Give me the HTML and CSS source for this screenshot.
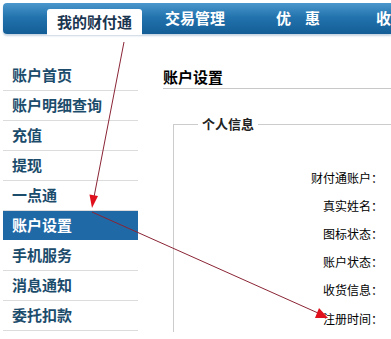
FILE: index.html
```html
<!DOCTYPE html>
<html lang="zh">
<head>
<meta charset="utf-8">
<title>账户设置</title>
<link rel="stylesheet" href="styles.css">
</head>
<body>
<div class="page">
  <header class="topbar">
    <div class="tab active">我的财付通</div>
    <div class="tab nav-trade">交易管理</div>
    <div class="tab nav-promo"><span>优</span><span class="gap">惠</span></div>
    <div class="tab nav-fav">收</div>
  </header>
  <div class="content">
    <ul class="sidebar">
      <li class="item">账户首页</li>
      <li class="item">账户明细查询</li>
      <li class="item">充值</li>
      <li class="item">提现</li>
      <li class="item">一点通</li>
      <li class="item selected">账户设置</li>
      <li class="item">手机服务</li>
      <li class="item">消息通知</li>
      <li class="item">委托扣款</li>
    </ul>
    <main class="main">
      <h2 class="title">账户设置</h2>
      <fieldset class="info">
        <legend class="legend">个人信息</legend>
        <div class="row"><span class="label">财付通账户：</span></div>
        <div class="row"><span class="label">真实姓名：</span></div>
        <div class="row"><span class="label">图标状态：</span></div>
        <div class="row"><span class="label">账户状态：</span></div>
        <div class="row"><span class="label">收货信息：</span></div>
        <div class="row"><span class="label">注册时间：</span></div>
      </fieldset>
    </main>
  </div>
  <svg class="arrows" width="391" height="339" viewBox="0 0 391 339" xmlns="http://www.w3.org/2000/svg">
    <line x1="124" y1="42" x2="94" y2="197" stroke="#8a2435" stroke-width="1"/>
    <polygon points="92,208 98,196 89.5,194.5" fill="#e0101c"/>
    <line x1="92" y1="212" x2="318" y2="313" stroke="#8a2435" stroke-width="1"/>
    <polygon points="328,318 315,318 319,308" fill="#e0101c"/>
  </svg>
</div>
</body>
</html>
```

FILE: styles.css
```css
html, body {
  margin: 0;
  padding: 0;
  background: #ffffff;
}

.page {
  position: relative;
  width: 391px;
  height: 339px;
  overflow: hidden;
  font-family: "Noto Sans CJK SC", "Noto Sans", sans-serif;
}

.topbar {
  margin: 3px 0 0 3px;
  height: 31px;
  border-radius: 4px 0 0 4px;
  background: linear-gradient(#4a97cc 0%, #2373ae 45%, #135d96 100%);
  box-shadow: 0 2px 2px #c9d6e2;
  display: flex;
  align-items: flex-end;
  white-space: nowrap;
}

.tab {
  font-size: 15px;
  font-weight: bold;
  color: #ffffff;
  line-height: 20px;
  padding-bottom: 6px;
}

.tab.active {
  margin-left: 44px;
  width: 95px;
  height: 26px;
  box-sizing: border-box;
  padding: 3px 0 0;
  background: #ffffff;
  color: #1a3550;
  text-align: center;
  border-radius: 3px 3px 0 0;
  position: relative;
  top: 1px;
}

.nav-trade { margin-left: 23px; }
.nav-promo { margin-left: 51px; }
.nav-promo .gap { margin-left: 14px; }
.nav-fav { margin-left: 56px; }

.content {
  display: flex;
  margin-top: 27px;
}

.sidebar {
  list-style: none;
  margin: 0 0 0 3px;
  padding: 0;
  width: 135px;
  flex: none;
}

.item {
  height: 29px;
  line-height: 28px;
  border-bottom: 1px solid #dcdcdc;
  padding-left: 9px;
  font-size: 15px;
  font-weight: bold;
  color: #1c4c6c;
  white-space: nowrap;
}

.item.selected {
  background: #1f69a6;
  color: #ffffff;
  border-bottom-color: #ffffff;
}

.main {
  flex: 1;
  margin-left: 25px;
  min-width: 0;
}

.title {
  margin: 5px 0 0;
  font-size: 15px;
  font-weight: bold;
  color: #000000;
  line-height: 22px;
  border-bottom: 1px solid #c8c8c8;
  white-space: nowrap;
}

.info {
  margin: 26px 0 0 10px;
  padding: 30px 0 0;
  border: 1px solid #cccccc;
  border-right: none;
  border-bottom: none;
  min-width: 0;
}

.legend {
  margin-left: 24px;
  padding: 0 4px;
  font-size: 13px;
  font-weight: bold;
  color: #222222;
  line-height: 18px;
}

.row {
  display: flex;
  height: 28.2px;
  align-items: center;
}

.label {
  width: 209px;
  text-align: right;
  font-size: 12px;
  color: #000000;
  white-space: nowrap;
}

.arrows {
  position: absolute;
  top: 0;
  left: 0;
  pointer-events: none;
}
```
